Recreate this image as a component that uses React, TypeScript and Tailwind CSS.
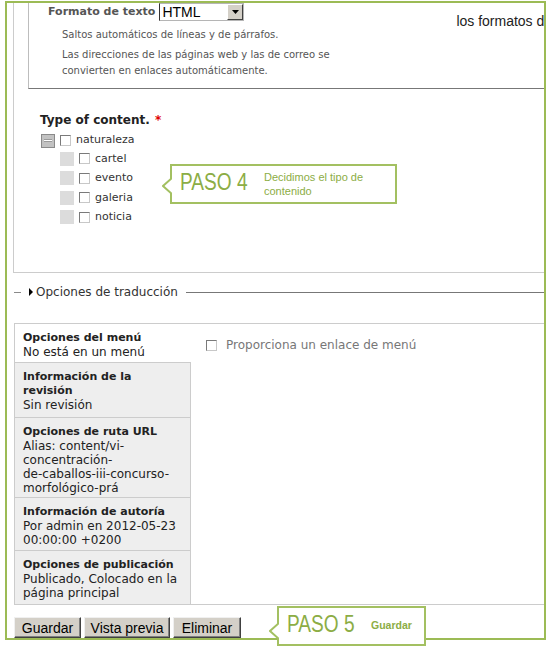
import type { ReactNode } from "react";

// Drupal node form (bottom half) with two tutorial callouts on top

const tabs = [
  { title: "Opciones del menú", lines: ["No está en un menú"], h: "h-[39px]", active: true },
  { title: "Información de la", lines: ["revisión"], sub: ["Sin revisión"], h: "h-[55px]" },
  {
    title: "Opciones de ruta URL",
    sub: ["Alias: content/vi-", "concentración-", "de-caballos-iii-concurso-", "morfológico-prá"],
    h: "h-[80px]",
  },
  { title: "Información de autoría", sub: ["Por admin en 2012-05-23", "00:00:00 +0200"], h: "h-[53px]" },
  { title: "Opciones de publicación", sub: ["Publicado, Colocado en la", "página principal"], h: "h-[53px]", last: true },
];

function Checkbox() {
  return (
    <span className="block w-[11px] h-[11px] bg-white border border-t-[#7a7a7a] border-l-[#7a7a7a] border-r-[#c8c8c8] border-b-[#c8c8c8]" />
  );
}

function Callout({ className, pointerTop, children }: { className: string; pointerTop: string; children: ReactNode }) {
  return (
    <div className={`absolute bg-white border-2 border-[#a3c061] flex items-center ${className}`}>
      <svg className={`absolute left-[-10px] ${pointerTop}`} width="10" height="16" viewBox="0 0 10 16">
        <polygon points="10,0 1,8 10,16" fill="#fff" />
        <polyline points="10,0 1,8 10,16" fill="none" stroke="#a3c061" strokeWidth="2" />
      </svg>
      {children}
    </div>
  );
}

function Paso({ n }: { n: number }) {
  return (
    <span className="w-[66px] shrink-0 whitespace-nowrap">
      <span className="inline-block origin-left scale-x-[0.83] font-['Liberation_Sans',sans-serif] text-[23px] leading-none text-[#8cad45]">
        PASO {n}
      </span>
    </span>
  );
}

export default function App() {
  return (
    <div className="relative w-[556px] h-[656px] bg-white overflow-hidden font-['DejaVu_Sans',sans-serif] text-[#222]">
      <div className="ml-[5px] mt-[1px] w-[541px] h-[639px] border-2 border-[#9cbb55] overflow-hidden">
        {/* body fieldset */}
        <div className="ml-[6px] h-[270px] border-l border-b border-[#cccccc]">
          <div className="ml-[14px] h-[86px] border-l border-b border-l-[#bdbdbd] border-b-[#777777]">
            <div className="flex items-start h-[18px] pl-[19px]">
              <span className="shrink-0 whitespace-nowrap h-[18px] flex items-center text-[11px] font-bold text-[#555]">
                Formato de texto
              </span>
              <div className="shrink-0 ml-[4px] w-[85px] h-[18px] flex items-center border border-[#b5b5b5] border-l-[#333]">
                <span className="flex-1 pl-[2px] font-['Liberation_Sans',sans-serif] text-[14px] leading-[16px] text-black">HTML</span>
                <span className="w-[16px] h-[16px] flex items-center justify-center bg-[#d4d0c8] border border-t-white border-l-white border-r-[#404040] border-b-[#404040]">
                  <svg width="7" height="4" viewBox="0 0 7 4">
                    <polygon points="0,0 7,0 3.5,4" fill="#000" />
                  </svg>
                </span>
              </div>
              <span className="shrink-0 ml-[212px] mt-[10px] whitespace-nowrap font-['Liberation_Sans',sans-serif] text-[14px] leading-[16px] text-[#222]">
                los formatos de texto
              </span>
            </div>
            <div className="pl-[33px] mt-[6px] text-[10px] leading-[16px] text-[#555]">
              <p>Saltos automáticos de líneas y de párrafos.</p>
              <p className="mt-[4px]">
                Las direcciones de las páginas web y las de correo se
                <br />
                convierten en enlaces automáticamente.
              </p>
            </div>
          </div>

          <div className="pl-[26px] mt-[23px] text-[12px] leading-[16px] font-bold text-[#222]">
            Type of content. <span className="ml-[1px] text-[#e00000]">*</span>
          </div>

          <div className="pl-[27px] mt-[4px] text-[11px] text-[#333]">
            <div className="flex items-center h-[17px]">
              <span className="w-[14px] h-[14px] flex items-center justify-center bg-[#c2c2c2] border border-[#8a8a8a]">
                <span className="w-[8px] h-[3px] bg-white border-y border-[#9a9a9a]" />
              </span>
              <span className="ml-[5px]">
                <Checkbox />
              </span>
              <span className="ml-[5px]">naturaleza</span>
            </div>
            {["cartel", "evento", "galeria", "noticia"].map((t) => (
              <div key={t} className="flex items-center h-[19.5px]">
                <span className="ml-[19px] w-[14px] h-[14px] bg-[#dcdcdc]" />
                <span className="ml-[5px]">
                  <Checkbox />
                </span>
                <span className="ml-[5px]">{t}</span>
              </div>
            ))}
          </div>
        </div>

        {/* collapsed translation fieldset */}
        <div className="mt-[11px] h-[16px] flex items-center pl-[7px]">
          <span className="w-[7px] h-px bg-[#8a8a8a]" />
          <svg className="ml-[8px]" width="4" height="8" viewBox="0 0 4 8">
            <polygon points="0,0 4,4 0,8" fill="#000" />
          </svg>
          <span className="ml-[3px] text-[12px] text-[#333]">Opciones de traducción</span>
          <span className="ml-[8px] flex-1 h-px bg-[#777]" />
        </div>

        {/* vertical tabs */}
        <div className="mt-[23px] ml-[7px] flex border-t border-l border-b border-[#cccccc]">
          <div className="w-[176px] shrink-0">
            {tabs.map((t) => (
              <div
                key={t.title}
                className={`${t.h} pl-[8px] pt-[7px] ${t.last ? "" : "border-b"} border-[#cccccc] ${
                  t.active ? "bg-white" : "bg-[#eeeeee] border-r"
                }`}
              >
                <div className="text-[11px] leading-[14px] font-bold text-[#222]">{t.title}</div>
                {t.active ? (
                  <div className="text-[12px] leading-[14px] text-[#222]">{t.lines?.[0]}</div>
                ) : (
                  <>
                    {t.lines?.map((l) => (
                      <div key={l} className="text-[11px] leading-[14px] font-bold text-[#222]">
                        {l}
                      </div>
                    ))}
                    {t.sub?.map((l) => (
                      <div key={l} className="text-[12px] leading-[14px] text-[#222]">
                        {l}
                      </div>
                    ))}
                  </>
                )}
              </div>
            ))}
          </div>
          <div className="flex-1 pl-[15px] pt-[14px]">
            <div className="flex items-center">
              <Checkbox />
              <span className="ml-[9px] text-[12px] leading-[14px] text-[#777]">Proporciona un enlace de menú</span>
            </div>
          </div>
        </div>

        {/* actions */}
        <div className="mt-[12px] ml-[7px] flex gap-[3px] font-['Liberation_Sans',sans-serif] text-[14px] text-black">
          <button className="w-[67px] h-[21px] bg-[#d4d0c8] border border-t-[#f0f0f0] border-l-[#f0f0f0] border-r-[#404040] border-b-[#404040] shadow-[inset_-1px_-1px_0_#808080]">
            Guardar
          </button>
          <button className="w-[86px] h-[21px] bg-[#d4d0c8] border border-t-[#f0f0f0] border-l-[#f0f0f0] border-r-[#404040] border-b-[#404040] shadow-[inset_-1px_-1px_0_#808080]">
            Vista previa
          </button>
          <button className="w-[68px] h-[21px] bg-[#d4d0c8] border border-t-[#f0f0f0] border-l-[#f0f0f0] border-r-[#404040] border-b-[#404040] shadow-[inset_-1px_-1px_0_#808080]">
            Eliminar
          </button>
        </div>
      </div>

      <Callout className="left-[170px] top-[164px] w-[227px] h-[40px] pl-[8px]" pointerTop="top-[12px]">
        <Paso n={4} />
        <span className="ml-[18px] whitespace-nowrap font-['Liberation_Sans',sans-serif] text-[11px] leading-[14px] text-[#8cad45]">
          Decidimos el tipo de
          <br />
          contenido
        </span>
      </Callout>

      <Callout className="left-[277px] top-[606px] w-[149px] h-[40px] pl-[8px]" pointerTop="top-[15px]">
        <Paso n={5} />
        <span className="ml-[18px] whitespace-nowrap font-['Liberation_Sans',sans-serif] text-[10.5px] font-bold text-[#8cad45]">
          Guardar
        </span>
      </Callout>
    </div>
  );
}
